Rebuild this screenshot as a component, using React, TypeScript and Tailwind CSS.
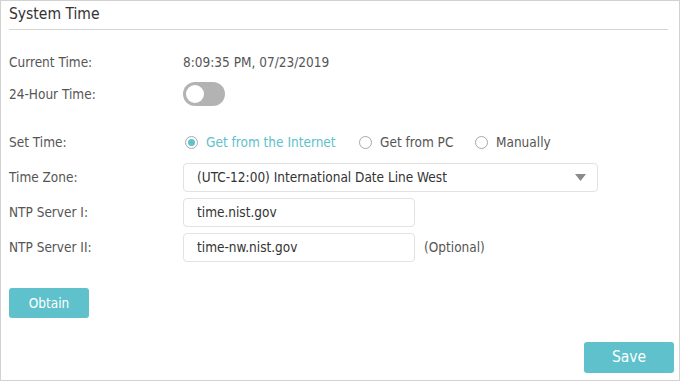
import React from "react";

const font = { fontFamily: '"DejaVu Sans Condensed", "DejaVu Sans", sans-serif' };

function Radio({ checked, label }: { checked?: boolean; label: string }) {
  return (
    <div className="flex items-center">
      <span className="w-[13px] h-[13px] rounded-full border border-[#a8a8a8] bg-white flex items-center justify-center">
        {checked && <span className="w-[7px] h-[7px] rounded-full bg-[#5ec1cb]" />}
      </span>
      <span className={"ml-[8px] " + (checked ? "text-[#5ec1cb]" : "text-[#555]")}>{label}</span>
    </div>
  );
}

export default function App() {
  return (
    <div
      className="w-[680px] h-[381px] border border-[#d2d2d2] bg-white flex flex-col text-[13.5px] text-[#555]"
      style={font}
    >
      <div className="h-[28px] pl-[8px] pt-[3px] text-[15.5px] text-[#333] leading-[20px]">System Time</div>
      <div className="ml-[8px] mr-[11px] h-px bg-[#d4d4d4]" />

      <div className="flex items-center h-[20px] mt-[22px] pl-[8px]">
        <div className="w-[174px]">Current Time:</div>
        <div>8:09:35 PM, 07/23/2019</div>
      </div>

      <div className="flex items-center h-[24px] mt-[10px] pl-[8px]">
        <div className="w-[174px]">24-Hour Time:</div>
        <div className="w-[42px] h-[24px] rounded-full bg-[#b3b3b3] flex items-center pl-[3px]">
          <span className="w-[18px] h-[18px] rounded-full bg-white" />
        </div>
      </div>

      <div className="flex items-center h-[20px] mt-[26px] pl-[8px]">
        <div className="w-[174px]">Set Time:</div>
        <div className="flex items-center">
          <div className="w-[176px] pl-[2px]"><Radio checked label="Get from the Internet" /></div>
          <div className="w-[116px]"><Radio label="Get from PC" /></div>
          <Radio label="Manually" />
        </div>
      </div>

      <div className="flex items-center h-[29px] mt-[11px] pl-[8px]">
        <div className="w-[174px]">Time Zone:</div>
        <div className="w-[415px] h-[29px] rounded-[4px] border border-[#e2e2e2] flex items-center pl-[13px] pr-[11px] text-[#333]">
          <span className="flex-1">(UTC-12:00) International Date Line West</span>
          <svg width="11" height="7" viewBox="0 0 11 7"><path d="M0 0 H11 L5.5 7 Z" fill="#8a8a8a" /></svg>
        </div>
      </div>

      <div className="flex items-center h-[29px] mt-[6px] pl-[8px]">
        <div className="w-[174px]">NTP Server I:</div>
        <div className="w-[232px] h-[29px] rounded-[4px] border border-[#e2e2e2] flex items-center pl-[13px] text-[#333]">
          time.nist.gov
        </div>
      </div>

      <div className="flex items-center h-[29px] mt-[6px] pl-[8px]">
        <div className="w-[174px]">NTP Server II:</div>
        <div className="w-[232px] h-[29px] rounded-[4px] border border-[#e2e2e2] flex items-center pl-[13px] text-[#333]">
          time-nw.nist.gov
        </div>
        <div className="ml-[9px]">(Optional)</div>
      </div>

      <div className="mt-[26px] pl-[8px]">
        <button className="w-[80px] h-[30px] rounded-[3px] bg-[#5ec1cb] text-white text-[13.5px]">Obtain</button>
      </div>

      <div className="flex justify-end mt-[24px] pr-[5px]">
        <button className="w-[90px] h-[31px] rounded-[3px] bg-[#5ec1cb] text-white text-[15.5px]">Save</button>
      </div>
    </div>
  );
}
